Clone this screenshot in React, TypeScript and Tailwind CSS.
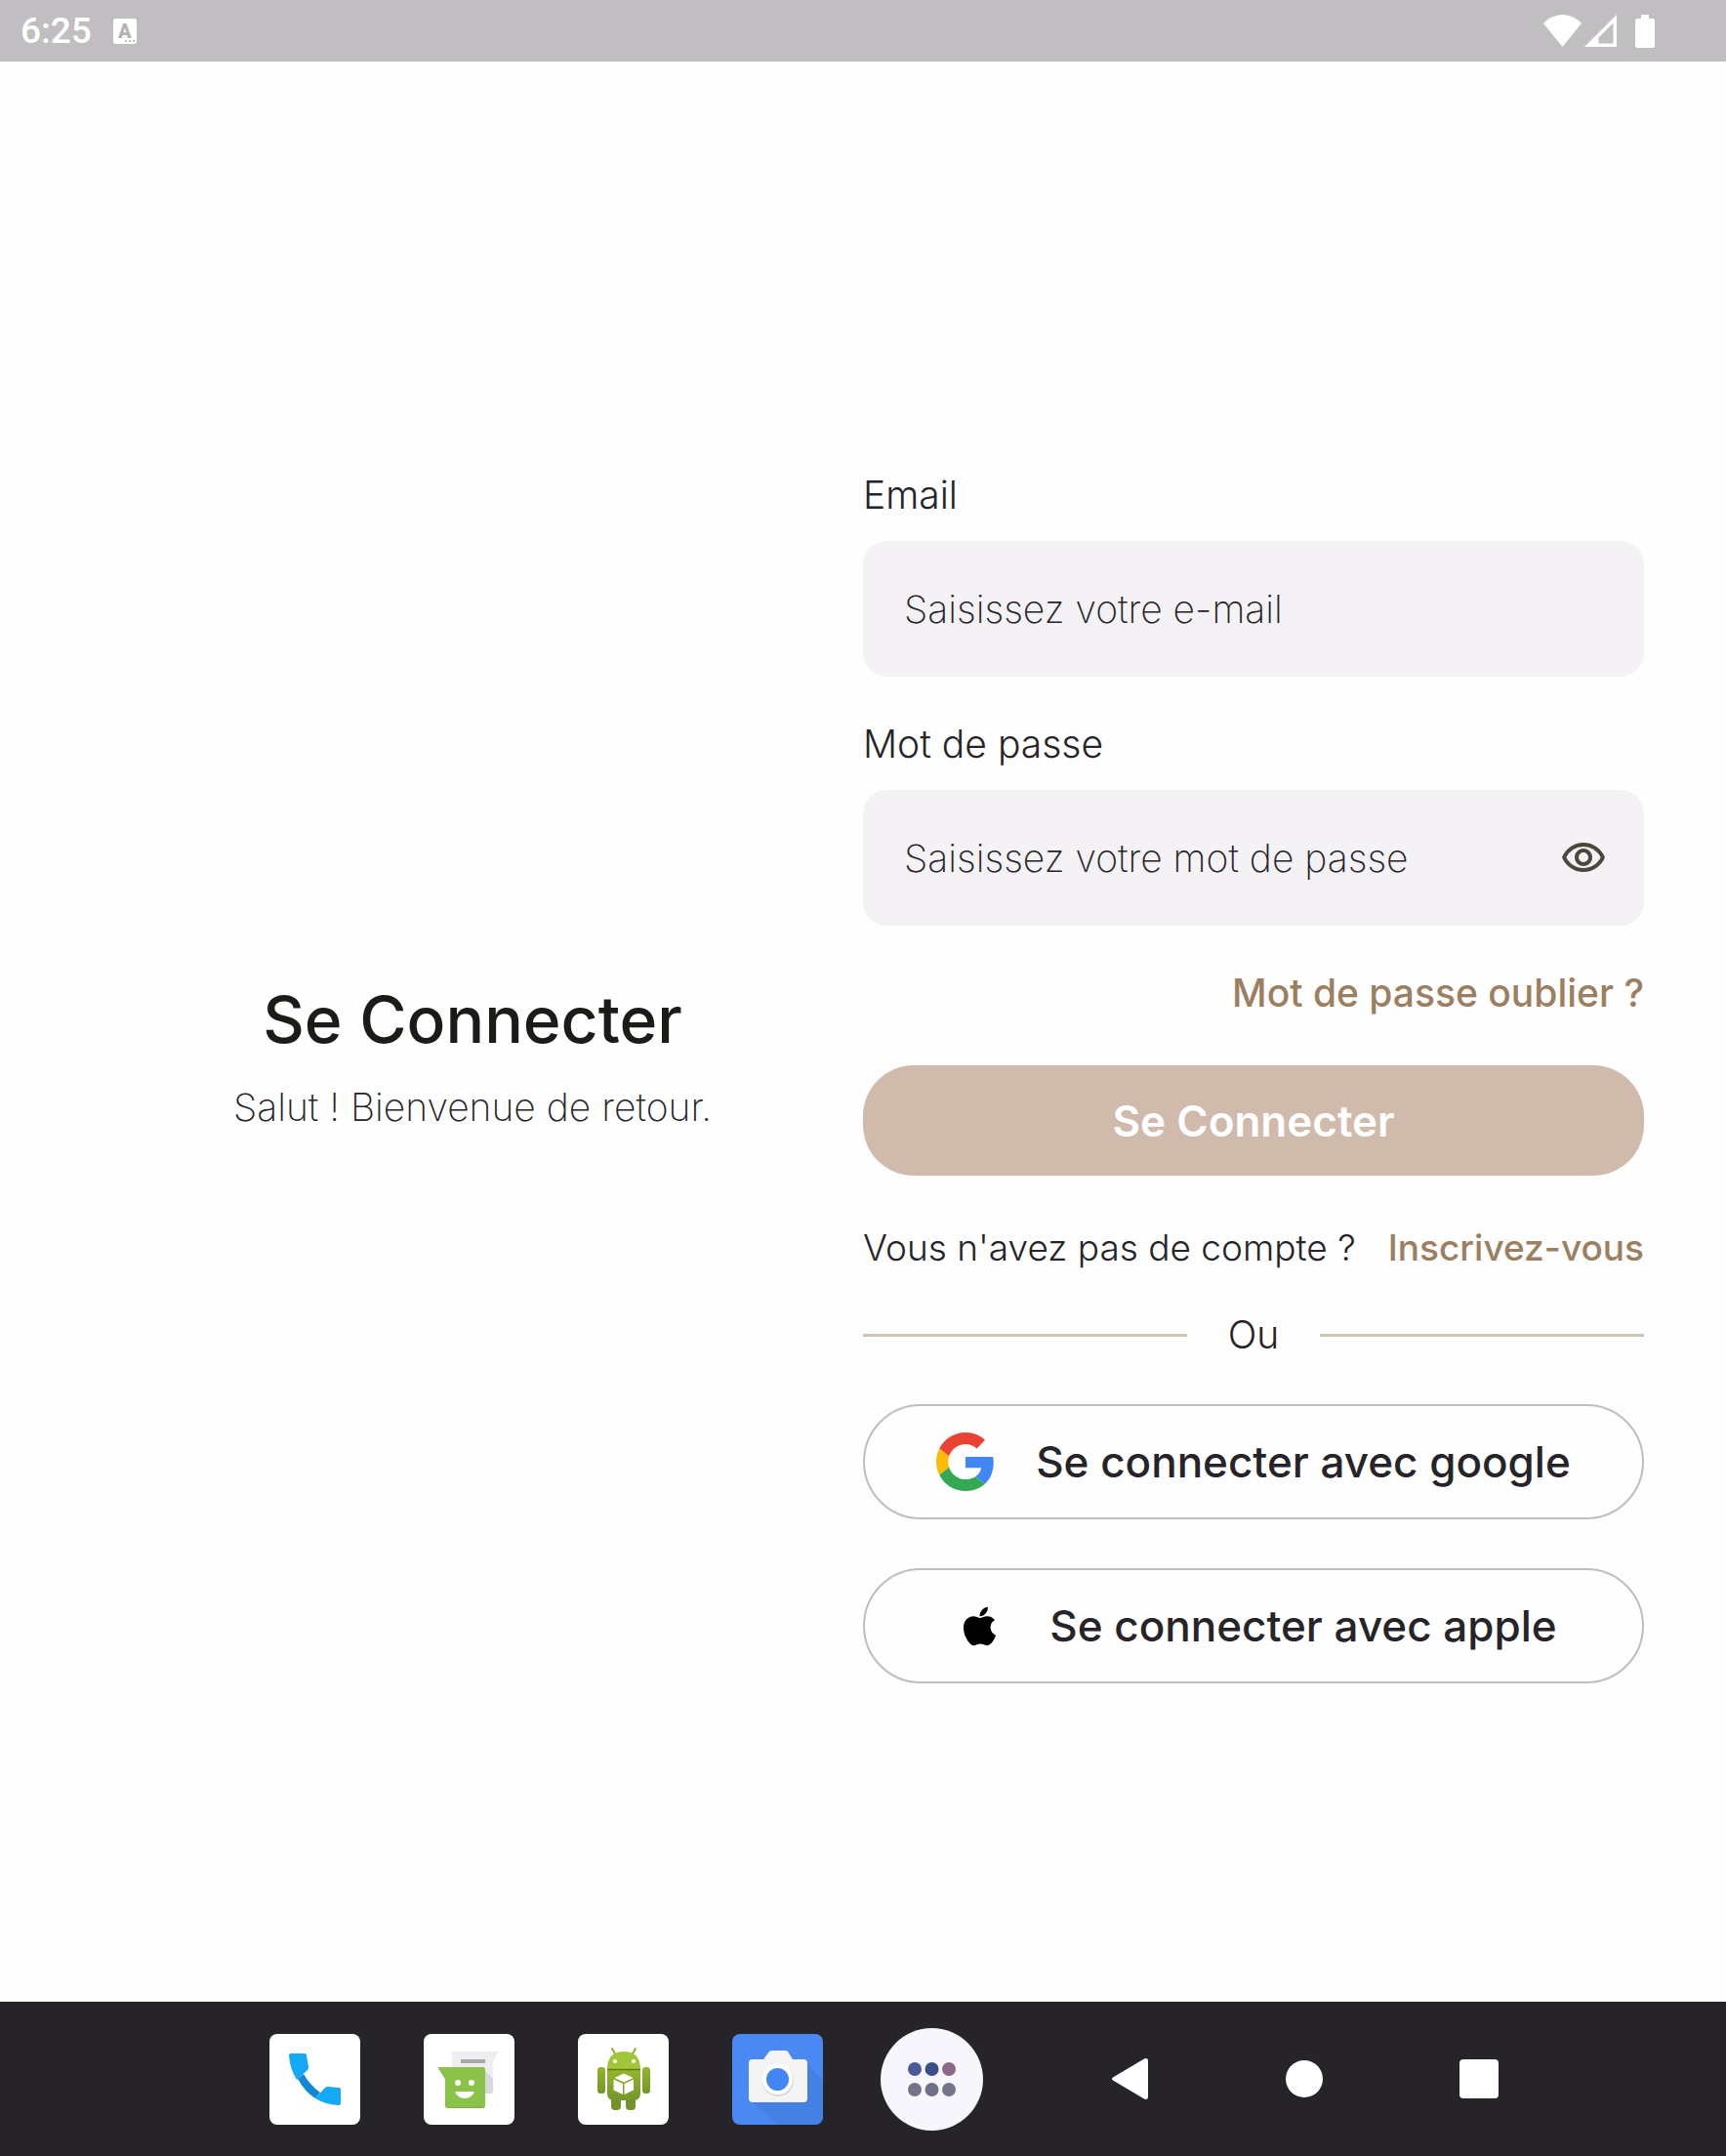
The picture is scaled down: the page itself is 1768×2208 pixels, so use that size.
import { useState } from 'react'
import { FaApple } from 'react-icons/fa'
import { MdOutlineVisibility, MdOutlineVisibilityOff } from 'react-icons/md'

function StatusBar() {
  return (
    <header className="flex h-[63px] items-center justify-between bg-[#c0bec1] pl-[21px] pr-[73px] text-white">
      <div className="flex items-center gap-[22px]">
        <span className="font-[Roboto,sans-serif] text-[37px] leading-[44px] font-medium">6:25</span>
        <span className="relative flex h-[26px] w-6 justify-center rounded-[3px] bg-white font-[Roboto,sans-serif] text-[20px] leading-[26px] font-black text-[#b5b3b6]">
          A
          <svg className="absolute right-[2px] bottom-[2px]" width="10" height="2" viewBox="0 0 10 2" fill="#c0bec1">
            <path d="M0 0h2v2H0zM4 0h2v2H4zM8 0h2v2H8z" />
          </svg>
        </span>
      </div>
      <div className="flex items-center">
        <svg width="39" height="34" viewBox="0 0 39 34" fill="currentColor">
          <path d="M0 9C5 3.500 12 0 19.500 0S34 3.500 39 9L19.500 33z" />
        </svg>
        <svg className="ml-[3px]" width="33" height="34" viewBox="0 0 33 34" fill="currentColor" fillRule="evenodd">
          <path d="M33 0v33H0zM29.500 8.500L14.500 23.500v6h15z" />
        </svg>
        <svg className="ml-[19px]" width="20" height="34" viewBox="0 0 20 34" fill="currentColor">
          <path d="M6 0h8v4h4a2 2 0 0 1 2 2v26a2 2 0 0 1-2 2H2a2 2 0 0 1-2-2V6a2 2 0 0 1 2-2h4z" />
        </svg>
      </div>
    </header>
  )
}

function GoogleIcon() {
  return (
    <svg width="60" height="60" viewBox="0 0 48 48">
      <path fill="#EA4335" d="M24 9.500c3.540 0 6.710 1.220 9.210 3.600l6.850-6.850C35.900 2.380 30.470 0 24 0 14.620 0 6.510 5.380 2.560 13.220l7.980 6.190C12.430 13.720 17.740 9.500 24 9.500z" />
      <path fill="#4285F4" d="M46.980 24.550c0-1.570-.15-3.090-.38-4.550H24v9.020h12.940c-.58 2.960-2.260 5.480-4.780 7.180l7.730 6c4.510-4.180 7.090-10.360 7.090-17.650z" />
      <path fill="#FBBC05" d="M10.530 28.590c-.48-1.450-.76-2.990-.76-4.590s.27-3.140.76-4.590l-7.980-6.190C.92 16.460 0 20.120 0 24c0 3.880.92 7.540 2.560 10.780l7.970-6.190z" />
      <path fill="#34A853" d="M24 48c6.480 0 11.930-2.130 15.890-5.810l-7.730-6c-2.150 1.450-4.920 2.300-8.160 2.300-6.260 0-11.570-4.220-13.470-9.910l-7.980 6.190C6.510 42.620 14.620 48 24 48z" />
    </svg>
  )
}

function PhoneIcon() {
  return (
    <svg width="93" height="93" viewBox="0 0 93 93">
      <path d="M29 46L35 41Q41 52 52 60L47 66Q36 59 29 46z" fill="#1287d4" />
      <path d="M22 20h14q2 0 2 2l2 12q0 2-1 3l-11 10q-7-11-8-25q0-2 2-2z" fill="#13a9f4" />
      <path d="M47 66l10-11q1-1 3-1l11 1q2 0 2 2v14q0 2-2 2-12 0-24-7z" fill="#13a9f4" />
    </svg>
  )
}

function MessagesIcon() {
  return (
    <svg width="93" height="93" viewBox="0 0 93 93">
      <path d="M31 18h46l-6 11v29q0 3-3 3H32q-3 0-3-3V20q0-2 2-2z" fill="#eeedef" />
      <path d="M63 38l8 8v12q0 3-3 3h-5z" fill="#d9d8dc" />
      <path d="M38 26h25v4H38z" fill="#a9a8ab" />
      <path d="M15 35q-1-1 1-1h44q3 0 3 3v36q0 3-3 3H25q-3 0-3-3V46z" fill="#7fae38" />
      <path d="M15 35q-1-1 1-1h44q3 0 3 3v35q0 3-3 3H25q-3 0-3-3V46z" fill="#8bc34a" />
      <circle cx="35" cy="50" r="3" fill="#fff" />
      <circle cx="49" cy="50" r="3" fill="#fff" />
      <path d="M32 59h20q-3 7-10 7t-10-7z" fill="#fff" />
    </svg>
  )
}

function AndroidIcon() {
  return (
    <svg width="93" height="93" viewBox="0 0 93 93">
      <defs>
        <linearGradient id="droid" x1="0" y1="0" x2="0" y2="1">
          <stop offset="0" stopColor="#93b52c" />
          <stop offset="1" stopColor="#74962a" />
        </linearGradient>
      </defs>
      <path d="M35 15l4 7M59 15l-4 7" stroke="#8fae2a" strokeWidth="2" strokeLinecap="round" />
      <path d="M30 36q0-18 17-18t17 18z" fill="#a2c639" />
      <circle cx="38" cy="28" r="2" fill="#fff" />
      <circle cx="57" cy="28" r="2" fill="#fff" />
      <rect x="34" y="60" width="10" height="18" rx="4" fill="#73922a" />
      <rect x="49" y="60" width="10" height="18" rx="4" fill="#73922a" />
      <path d="M30 37h34v24q0 7-7 7H37q-7 0-7-7z" fill="url(#droid)" />
      <path d="M30 36.500h34" stroke="#5e7d14" strokeWidth="1.500" />
      <rect x="20" y="34" width="8" height="27" rx="3" fill="url(#droid)" />
      <rect x="66" y="34" width="8" height="27" rx="3" fill="url(#droid)" />
      <path d="M47 40.500l9.500 4.500-9.500 4.500-9.500-4.500zM36.500 46.500l9.500 4.500v11l-9.500-4.500zM57 46.500l-9.500 4.500v11l9.500-4.500z" fill="#fff" />
    </svg>
  )
}

function CameraIcon() {
  return (
    <svg width="93" height="93" viewBox="0 0 93 93">
      <path d="M76 30L93 47v46H46L20 69z" fill="#3f78d8" opacity="0.5" />
      <path d="M20 26h12l6-8q1-1 3-1h13q2 0 3 1l5 8h11q4 0 4 4v36q0 4-4 4H21q-4 0-4-4V30q0-4 3-4z" fill="#f4f4f5" />
      <circle cx="47" cy="48" r="16" fill="#d8d8dc" />
      <circle cx="46.500" cy="46.500" r="15.500" fill="#fff" />
      <circle cx="46.500" cy="46.500" r="11.500" fill="#4285f4" />
    </svg>
  )
}

const apps = [
  { name: 'Téléphone', icon: <PhoneIcon />, tile: 'bg-white' },
  { name: 'Messages', icon: <MessagesIcon />, tile: 'bg-white' },
  { name: 'API Demos', icon: <AndroidIcon />, tile: 'bg-white' },
  { name: 'Appareil photo', icon: <CameraIcon />, tile: 'bg-[#4a88f2]' },
]

function NavBar() {
  return (
    <nav className="flex h-[158px] items-center justify-center gap-[34px] bg-[#262428] pl-20">
      <div className="flex">
        {apps.map(app => (
          <div key={app.name} className="flex w-[158px] justify-center">
            <button type="button" aria-label={app.name} className={`overflow-hidden rounded-lg ${app.tile}`}>
              {app.icon}
            </button>
          </div>
        ))}
        <div className="-my-[6px] flex w-[158px] justify-center">
          <button type="button" aria-label="Toutes les applications" className="rounded-full bg-[#f8f6fd]">
            <svg width="105" height="105" viewBox="0 0 105 105">
              <circle cx="35" cy="42" r="7" fill="#4a5c96" />
              <circle cx="52.500" cy="42" r="7" fill="#3b4f82" />
              <circle cx="70" cy="42" r="7" fill="#8b6888" />
              <circle cx="35" cy="63" r="7" fill="#72748a" />
              <circle cx="52.500" cy="63" r="7" fill="#6c7088" />
              <circle cx="70" cy="63" r="7" fill="#72748a" />
            </svg>
          </button>
        </div>
      </div>
      <div className="flex items-center text-white">
        <button type="button" aria-label="Retour" className="flex w-[179px] justify-center">
          <svg width="37" height="42" viewBox="0 0 37 42" fill="currentColor">
            <path d="M1 19.500L33 .5Q37-1 37 3v36q0 4-4 2.500L1 22.500q-2-1.500 0-3z" />
          </svg>
        </button>
        <button type="button" aria-label="Accueil" className="flex w-[179px] justify-center">
          <span className="size-[38px] rounded-full bg-white" />
        </button>
        <button type="button" aria-label="Applications récentes" className="flex w-[179px] justify-center">
          <span className="size-10 rounded bg-white" />
        </button>
      </div>
    </nav>
  )
}

export default function App() {
  const [email, setEmail] = useState('')
  const [password, setPassword] = useState('')
  const [visible, setVisible] = useState(false)

  const inputClass =
    'h-[139px] w-full rounded-3xl bg-[#f4f2f5] px-[42px] text-[39px] font-extralight text-[#262428] outline-none placeholder:text-[#262428]'
  const socialClass =
    'flex h-[118px] w-full items-center justify-center gap-[42px] rounded-full border-2 border-[#bfbdc0] text-[44px] font-[450] whitespace-nowrap'

  return (
    <div className="flex min-h-screen flex-col bg-[#fefefe] font-[Inter,sans-serif] text-[#262428]">
      <StatusBar />

      <main className="grid flex-1 grid-cols-2 items-center px-[84px] pt-[92px]">
        {/* Titre */}
        <section className="pb-11 text-center">
          <h1 className="text-[66px] leading-[84px] font-medium text-[#1d1b18]">Se Connecter</h1>
          <p className="mt-[22px] text-[39px] leading-[52px] font-extralight">Salut ! Bienvenue de retour.</p>
        </section>

        {/* Formulaire */}
        <form className="flex flex-col text-[39px] leading-[52px] font-[350]" onSubmit={e => e.preventDefault()}>
          <label htmlFor="email">Email</label>
          <input id="email" type="email" className={`mt-[21px] ${inputClass}`} value={email}
            onChange={e => setEmail(e.target.value)} placeholder="Saisissez votre e-mail" />

          <label htmlFor="password" className="mt-[43px]">Mot de passe</label>
          <div className="relative mt-[21px]">
            <input id="password" type={visible ? 'text' : 'password'} className={inputClass} value={password}
              onChange={e => setPassword(e.target.value)} placeholder="Saisissez votre mot de passe" />
            <button type="button" onClick={() => setVisible(!visible)}
              aria-label={visible ? 'Masquer le mot de passe' : 'Afficher le mot de passe'}
              className="absolute inset-y-0 right-[38px] flex items-center text-[#4c463d]">
              {visible ? <MdOutlineVisibilityOff size={48} /> : <MdOutlineVisibility size={48} />}
            </button>
          </div>

          <a href="#mot-de-passe" className="mt-[43px] self-end font-medium text-[#9c7f61]">Mot de passe oublier ?</a>

          <button type="submit"
            className="mt-12 h-[113px] rounded-[52px] bg-[#cfbaac] text-[44px] font-semibold text-white">
            Se Connecter
          </button>

          <p className="mt-12 flex justify-between text-[37px] whitespace-nowrap">
            <span>Vous n'avez pas de compte ?</span>
            <a href="#inscription" className="font-medium text-[#9c7f61]">Inscrivez-vous</a>
          </p>

          <div className="mt-[37px] flex items-center gap-[42px]">
            <span className="h-[3px] flex-1 bg-[#ccc5b4]" />
            <span>Ou</span>
            <span className="h-[3px] flex-1 bg-[#ccc5b4]" />
          </div>

          <button type="button" className={`mt-[45px] ${socialClass}`}>
            <GoogleIcon />
            Se connecter avec google
          </button>
          <button type="button" className={`mt-[50px] ${socialClass}`}>
            <span className="flex size-[60px] items-center justify-center">
              <FaApple size={45} className="text-black" />
            </span>
            Se connecter avec apple
          </button>
        </form>
      </main>

      <NavBar />
    </div>
  )
}
